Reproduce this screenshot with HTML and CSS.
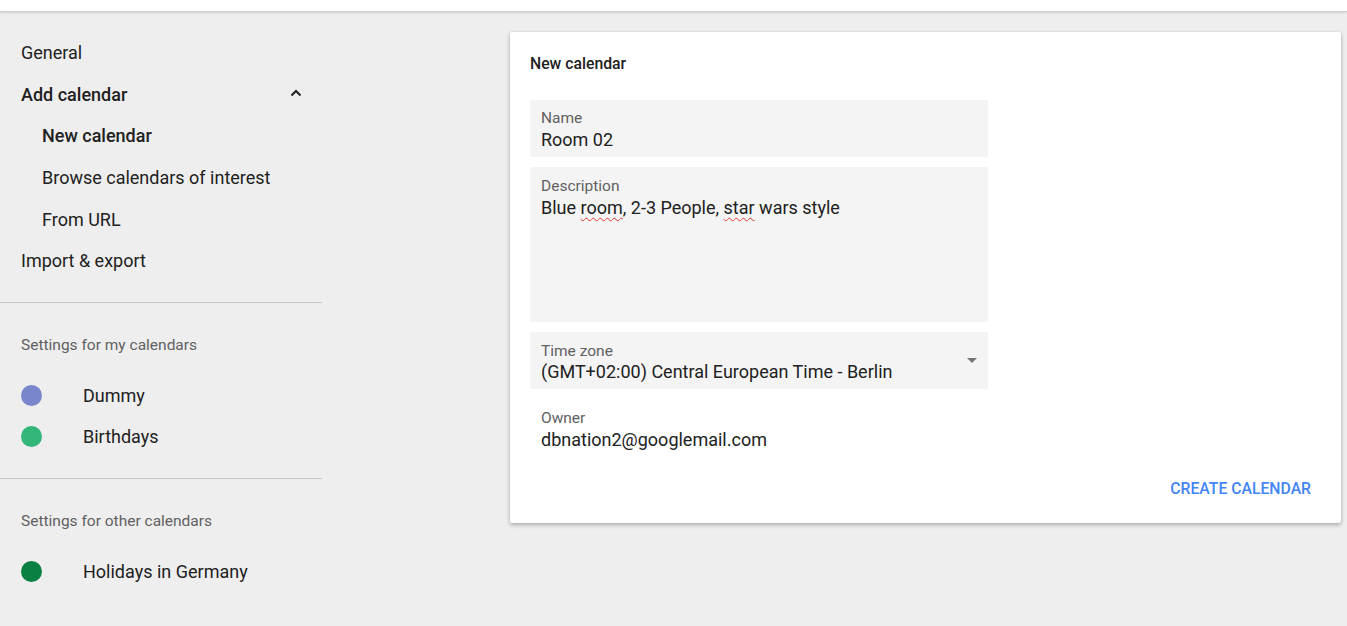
FILE: index.html
```html
<!DOCTYPE html>
<html lang="en">
<head>
<meta charset="utf-8">
<title>Settings - New calendar</title>
<link rel="stylesheet" href="styles.css">
</head>
<body>
<header class="topbar"></header>
<div class="layout">
  <nav class="sidebar">
    <div class="nav-group">
      <div class="nav-item">General</div>
      <div class="nav-item nav-strong nav-toggle">
        <span>Add calendar</span>
        <svg class="chev" width="12" height="8" viewBox="0 0 12 8"><path d="M1.5 6.5 L6 2 L10.5 6.5" fill="none" stroke="#212121" stroke-width="2"/></svg>
      </div>
      <div class="nav-item nav-sub nav-strong">New calendar</div>
      <div class="nav-item nav-sub">Browse calendars of interest</div>
      <div class="nav-item nav-sub">From URL</div>
      <div class="nav-item">Import &amp; export</div>
    </div>
    <div class="nav-section">
      <div class="section-label">Settings for my calendars</div>
      <div class="cal-item"><span class="dot dot-blue"></span><span>Dummy</span></div>
      <div class="cal-item"><span class="dot dot-green"></span><span>Birthdays</span></div>
    </div>
    <div class="nav-section">
      <div class="section-label">Settings for other calendars</div>
      <div class="cal-item"><span class="dot dot-dark"></span><span>Holidays in Germany</span></div>
    </div>
  </nav>
  <main class="main">
    <section class="card">
      <h2 class="card-title">New calendar</h2>
      <div class="fields">
        <div class="field">
          <div class="field-label">Name</div>
          <div class="field-value">Room 02</div>
        </div>
        <div class="field field-area">
          <div class="field-label">Description</div>
          <div class="field-value">Blue <span class="spell">room</span>, 2-3 People, <span class="spell">star</span> wars style</div>
        </div>
        <div class="field field-select">
          <div class="field-label">Time zone</div>
          <div class="field-value">(GMT+02:00) Central European Time - Berlin</div>
          <span class="caret"></span>
        </div>
        <div class="field field-plain">
          <div class="field-label">Owner</div>
          <div class="field-value">dbnation2@googlemail.com</div>
        </div>
      </div>
      <div class="actions">
        <button class="btn-text">CREATE CALENDAR</button>
      </div>
    </section>
  </main>
</div>
</body>
</html>
```
FILE: styles.css
```css
* { box-sizing: border-box; }
html, body { margin: 0; padding: 0; }
body {
  background: #eeeeee;
  font-family: Roboto, "Noto Sans", Arial, sans-serif;
  color: #212121;
  height: 626px;
  overflow: hidden;
}
.topbar {
  height: 12px;
  background: #ffffff;
  border-bottom: 1px solid #cfcfcf;
  box-shadow: 0 1px 2px rgba(0,0,0,0.12);
}
.layout {
  display: flex;
  align-items: flex-start;
}
.sidebar {
  width: 322px;
  flex: none;
  padding-top: 20px;
}
.nav-group {
  padding-bottom: 20px;
}
.nav-item {
  height: 41.6px;
  display: flex;
  align-items: center;
  padding-left: 21px;
  font-size: 18px;
  color: #212121;
}
.nav-strong { font-weight: 500; }
.nav-sub { padding-left: 42px; }
.nav-toggle {
  justify-content: space-between;
  padding-right: 20px;
}
.chev { display: block; margin-top: -2px; }
.nav-section {
  border-top: 1px solid #c6c6c6;
  padding-top: 32px;
  padding-bottom: 21px;
}
.section-label {
  font-size: 15.5px;
  line-height: 20px;
  color: #616161;
  padding-left: 21px;
  margin-bottom: 20px;
}
.cal-item {
  height: 41px;
  display: flex;
  align-items: center;
  padding-left: 21px;
  font-size: 18px;
}
.dot {
  width: 21px;
  height: 21px;
  border-radius: 50%;
  margin-right: 41px;
  flex: none;
}
.dot-blue { background: #7986cb; }
.dot-green { background: #33b679; }
.dot-dark { background: #0b8043; }
.main {
  flex: 1;
  padding: 20px 6px 0 188px;
}
.card {
  background: #ffffff;
  height: 491px;
  border-radius: 2px;
  box-shadow: 0 2px 4px rgba(0,0,0,0.28), 0 0 2px rgba(0,0,0,0.08);
  padding: 21px 20px 17px 20px;
  display: flex;
  flex-direction: column;
}
.card-title {
  margin: 0;
  font-size: 15.75px;
  font-weight: 500;
  line-height: 22px;
  color: #212121;
}
.fields {
  margin-top: 25px;
  width: 458px;
  display: flex;
  flex-direction: column;
  gap: 10px;
}
.field {
  position: relative;
  background: #f4f4f4;
  border-radius: 2px;
  padding: 9px 11px 5px 11px;
  height: 57px;
}
.field-area { height: 155px; padding-top: 10px; }
.field-select { padding-top: 10px; }
.field-plain { background: transparent; padding-top: 10px; }
.field-label {
  font-size: 15.5px;
  line-height: 18px;
  color: #616161;
}
.field-value {
  font-size: 18px;
  line-height: 24px;
  margin-top: 1px;
  color: #212121;
}
.field-area .field-value { margin-top: 1px; }
.field-select .field-value { margin-top: 0; }
.spell {
  text-decoration: underline wavy #e53935;
  text-decoration-thickness: 1px;
  text-underline-offset: 3px;
  text-decoration-skip-ink: none;
}
.caret {
  position: absolute;
  right: 11px;
  top: 26px;
  width: 0;
  height: 0;
  border-left: 5px solid transparent;
  border-right: 5px solid transparent;
  border-top: 5px solid #757575;
}
.actions {
  margin-top: auto;
  display: flex;
  justify-content: flex-end;
}
.btn-text {
  background: none;
  border: none;
  font-family: Roboto, "Noto Sans", Arial, sans-serif;
  font-size: 15.75px;
  font-weight: 500;
  color: #4285f4;
  height: 36px;
  padding: 0 10px;
  cursor: pointer;
}
```
